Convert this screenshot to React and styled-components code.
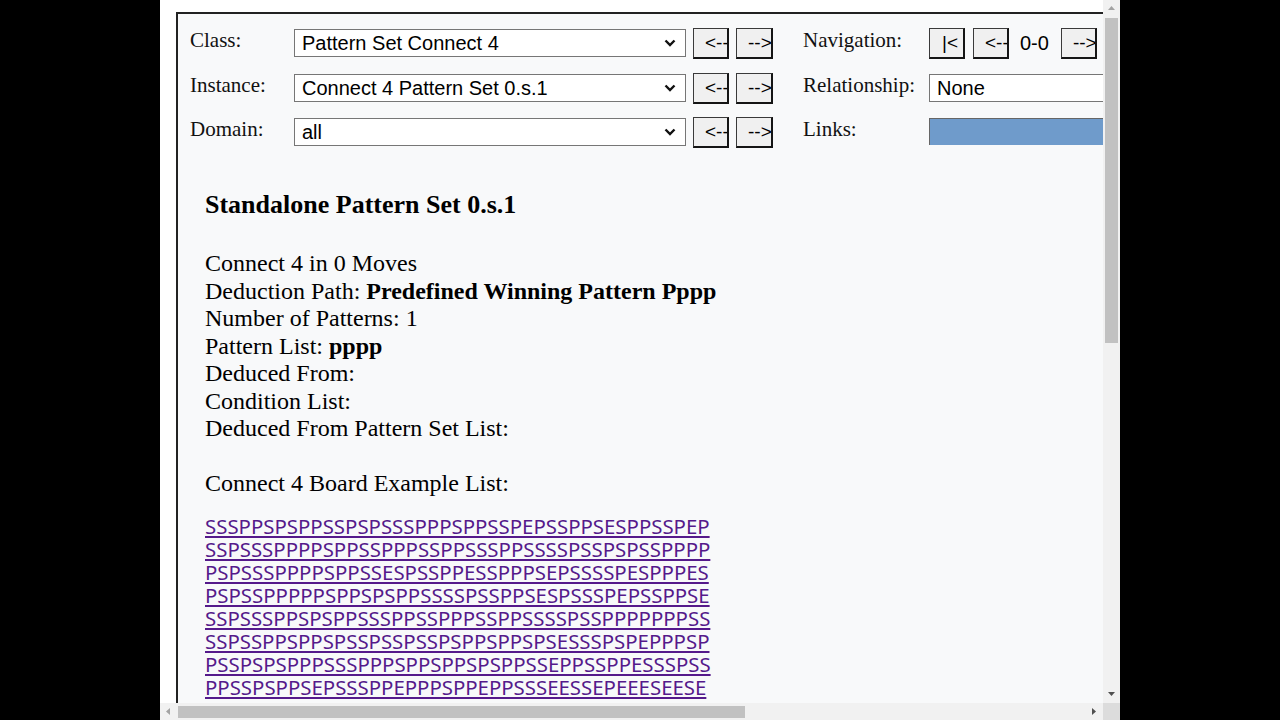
import React from 'react';
import styled, { createGlobalStyle } from 'styled-components';

const GlobalStyle = createGlobalStyle`
    html, body {
        margin: 0;
        padding: 0;
        background: #000;
    }
    body {
        font-family: "Liberation Serif", "Times New Roman", serif;
    }
`;

const Screen = styled.div`
    width: 1280px;
    height: 720px;
    display: flex;
    justify-content: center;
    background: #000;
`;

const Viewport = styled.div`
    width: 960px;
    height: 720px;
    background: #fff;
    display: grid;
    grid-template-columns: 1fr 17px;
    grid-template-rows: 1fr 17px;
`;

const Page = styled.div`
    overflow: hidden;
    min-width: 0;
    min-height: 0;
    padding: 12px 0 0 16px;
`;

const Frame = styled.div`
    width: 1100px;
    min-height: 700px;
    border-top: 2px solid #222;
    border-left: 2px solid #222;
    background: #f8f9fa;
    padding: 14px 0 0 12px;
`;

const Controls = styled.div`
    display: grid;
    grid-template-columns: 104px 509px 126px 400px;
    row-gap: 13.5px;
`;

const Label = styled.div`
    font-size: 21px;
    line-height: 24px;
    color: #111;
`;

const ControlRow = styled.div`
    display: flex;
    align-items: flex-start;
    gap: ${props => props.$gap || 7}px;
`;

const SelectWrap = styled.div`
    position: relative;
    flex-shrink: 0;
    margin-top: 1px;
`;

const Select = styled.select`
    display: block;
    width: ${props => props.$width}px;
    height: 28px;
    padding: 0 4px 0 7px;
    font: 20px "Liberation Sans", Arial, sans-serif;
    color: #000;
    background: #fff;
    border: 1px solid #767676;
    border-radius: 0;
    appearance: none;
    -webkit-appearance: none;
`;

const Chevron = styled.svg`
    position: absolute;
    right: 10px;
    top: 10px;
    pointer-events: none;
`;

const NavButton = styled.button`
    width: ${props => props.$width || 36}px;
    height: 31px;
    padding: 0 0 0 ${props => props.$pad || 11}px;
    text-align: left;
    overflow: hidden;
    white-space: nowrap;
    font: 19px "Liberation Sans", Arial, sans-serif;
    color: #000;
    background: #f0f0f0;
    border-style: solid;
    border-width: 1px 2px 2px 1px;
    border-color: #3a3a3a #151515 #151515 #3a3a3a;
    border-radius: 0;
    flex-shrink: 0;
`;

const Counter = styled.span`
    font: 20px "Liberation Sans", Arial, sans-serif;
    line-height: 31px;
    color: #000;
    margin: 0 4px 0 3px;
`;

const LinksBar = styled.div`
    width: 300px;
    height: 27px;
    margin-top: 1px;
    background: #6f9bcb;
    border-top: 1px solid #666;
    border-left: 1px solid #666;
    box-sizing: border-box;
`;

const Content = styled.div`
    padding: 42px 0 0 15px;
    color: #000;
`;

const Heading = styled.div`
    font-size: 26px;
    font-weight: bold;
    line-height: 30px;
    margin-bottom: 30px;
`;

const Line = styled.div`
    font-size: 24px;
    line-height: 27.5px;
    height: 27.5px;
    white-space: nowrap;
`;

const LinkList = styled.div`
    margin-top: 17px;
`;

const BoardLink = styled.a`
    display: block;
    width: max-content;
    font: 20.4px "Noto Sans", "DejaVu Sans", sans-serif;
    line-height: 23px;
    color: #551a8b;
    text-decoration: underline;
`;

const VScroll = styled.div`
    background: #f1f1f1;
    display: flex;
    flex-direction: column;
    align-items: center;
`;

const HScroll = styled.div`
    background: #f1f1f1;
    display: flex;
    align-items: center;
`;

const Corner = styled.div`
    background: #dcdcdc;
`;

const ArrowBox = styled.div`
    width: 17px;
    height: 17px;
    flex-shrink: 0;
    display: flex;
    align-items: center;
    justify-content: center;
`;

const VThumb = styled.div`
    width: 13px;
    height: 325px;
    margin-top: 1px;
    background: #c1c1c1;
`;

const HThumb = styled.div`
    width: 567px;
    height: 12px;
    margin-left: 1px;
    background: #c1c1c1;
`;

const Spacer = styled.div`
    flex: 1;
`;

const Arrow = ({ dir, color }) => {
    const points = {
        up: '1,6 4.5,2 8,6',
        down: '1,2 4.5,6 8,2',
        left: '6,1 2,4.5 6,8',
        right: '2,1 6,4.5 2,8',
    };
    return (
        <svg width="9" height="9" viewBox="0 0 9 9">
            <polygon points={points[dir]} fill={color} />
        </svg>
    );
};

const Dropdown = ({ width, value, label, arrow = true }) => (
    <SelectWrap>
        <Select $width={width} defaultValue={value}>
            <option value={value}>{label}</option>
        </Select>
        {arrow &&
            <Chevron width="12" height="8" viewBox="0 0 12 8">
                <polyline points="1.5,1.5 6,6 10.5,1.5" fill="none" stroke="#111" strokeWidth="2.4" />
            </Chevron>
        }
    </SelectWrap>
);

const boardLinks = [
    'SSSPPSPSPPSSPSPSSSPPPSPPSSPEPSSPPSESPPSSPEP',
    'SSPSSSPPPPSPPSSPPPSSPPSSSPPSSSSPSSPSPSSPPPP',
    'PSPSSSPPPPSPPSSESPSSPPESSPPPSEPSSSSPESPPPES',
    'PSPSSPPPPPSPPSPSPPSSSSPSSPPSESPSSSPEPSSPPSE',
    'SSPSSSPPSPSPPSSSPPSSPPPSSPPSSSSPSSPPPPPPPSS',
    'SSPSSPPSPPSPSSPSSPSSPSPPSPPSPSESSSPSPEPPPSP',
    'PSSPSPSPPPSSSPPPSPPSPPSPSPPSSEPPSSPPESSSPSS',
    'PPSSPSPPSEPSSSPPEPPPSPPEPPSSSEESSEPEEESEESE',
];

const App = () => {
    return (
        <>
            <GlobalStyle />
            <Screen>
                <Viewport>
                    <Page>
                        <Frame>
                            <Controls>
                                <Label>Class:</Label>
                                <ControlRow>
                                    <Dropdown width={392} value="ps" label="Pattern Set Connect 4" />
                                    <NavButton>&lt;--</NavButton>
                                    <NavButton $width={37}>--&gt;</NavButton>
                                </ControlRow>
                                <Label>Navigation:</Label>
                                <ControlRow $gap={8}>
                                    <NavButton $pad={12}>|&lt;</NavButton>
                                    <NavButton>&lt;--</NavButton>
                                    <Counter>0-0</Counter>
                                    <NavButton>--&gt;</NavButton>
                                </ControlRow>

                                <Label>Instance:</Label>
                                <ControlRow>
                                    <Dropdown width={392} value="i" label="Connect 4 Pattern Set 0.s.1" />
                                    <NavButton>&lt;--</NavButton>
                                    <NavButton $width={37}>--&gt;</NavButton>
                                </ControlRow>
                                <Label>Relationship:</Label>
                                <ControlRow>
                                    <Dropdown width={300} value="none" label="None" arrow={false} />
                                </ControlRow>

                                <Label>Domain:</Label>
                                <ControlRow>
                                    <Dropdown width={392} value="all" label="all" />
                                    <NavButton>&lt;--</NavButton>
                                    <NavButton $width={37}>--&gt;</NavButton>
                                </ControlRow>
                                <Label>Links:</Label>
                                <ControlRow>
                                    <LinksBar />
                                </ControlRow>
                            </Controls>

                            <Content>
                                <Heading>Standalone Pattern Set 0.s.1</Heading>
                                <Line>Connect 4 in 0 Moves</Line>
                                <Line>Deduction Path: <b>Predefined Winning Pattern Pppp</b></Line>
                                <Line>Number of Patterns: 1</Line>
                                <Line>Pattern List: <b>pppp</b></Line>
                                <Line>Deduced From:</Line>
                                <Line>Condition List:</Line>
                                <Line>Deduced From Pattern Set List:</Line>
                                <Line />
                                <Line>Connect 4 Board Example List:</Line>
                                <LinkList>
                                    {boardLinks.map((code, i) =>
                                        <BoardLink key={i} href="#">{code}</BoardLink>
                                    )}
                                </LinkList>
                            </Content>
                        </Frame>
                    </Page>

                    <VScroll>
                        <ArrowBox><Arrow dir="up" color="#a3a3a3" /></ArrowBox>
                        <VThumb />
                        <Spacer />
                        <ArrowBox><Arrow dir="down" color="#505050" /></ArrowBox>
                    </VScroll>

                    <HScroll>
                        <ArrowBox><Arrow dir="left" color="#a3a3a3" /></ArrowBox>
                        <HThumb />
                        <Spacer />
                        <ArrowBox><Arrow dir="right" color="#505050" /></ArrowBox>
                    </HScroll>
                    <Corner />
                </Viewport>
            </Screen>
        </>
    );
};

export default App;
